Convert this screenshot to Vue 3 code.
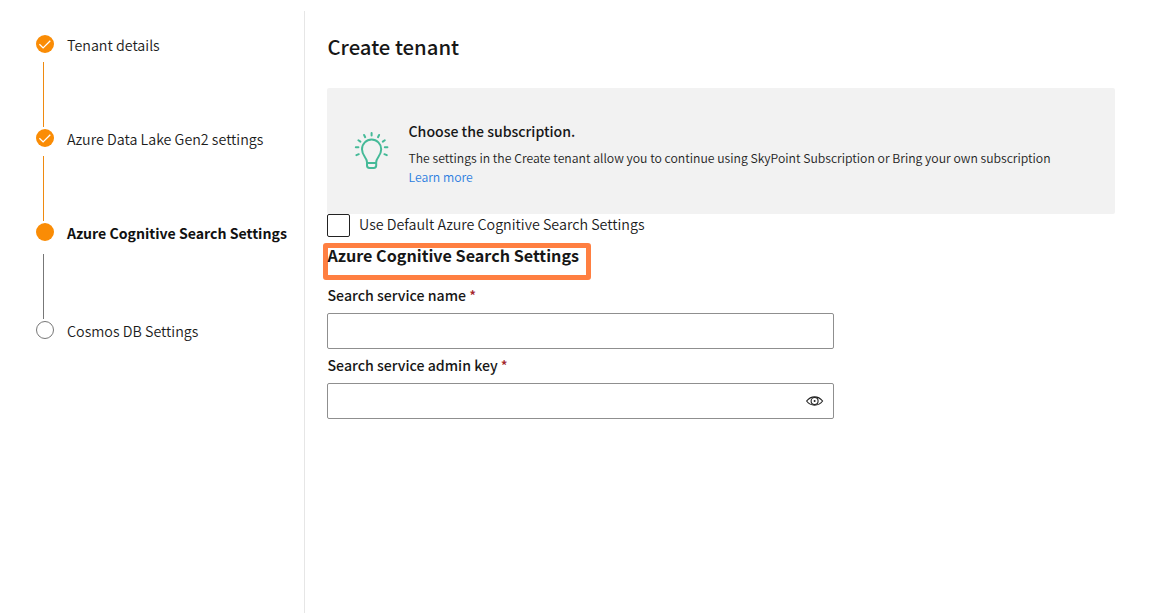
<script setup>
const steps = [
  { label: 'Tenant details', state: 'done' },
  { label: 'Azure Data Lake Gen2 settings', state: 'done' },
  { label: 'Azure Cognitive Search Settings', state: 'current' },
  { label: 'Cosmos DB Settings', state: 'todo' },
]
</script>

<template>
  <div class="page">
    <nav class="sidebar">
      <ol class="steps">
        <li v-for="(step, i) in steps" :key="step.label" class="step" :class="step.state">
          <div class="rail">
            <span class="dot">
              <svg v-if="step.state === 'done'" viewBox="0 0 18 18" width="18" height="18">
                <path d="M3.4 9.3 L7.1 12.9 L14.3 5.8" fill="none" stroke="#fff" stroke-width="1.3" />
              </svg>
            </span>
            <span v-if="i < steps.length - 1" class="line"></span>
          </div>
          <span class="label">{{ step.label }}</span>
        </li>
      </ol>
    </nav>
    <main class="content">
      <h1>Create tenant</h1>
      <section class="banner">
        <svg class="bulb" viewBox="0 0 36 40" width="36" height="40" fill="none" stroke="#45ba98" stroke-width="2" stroke-linecap="round">
          <path d="M13 31.2 C13 26.5 8 25 8 18.2 A9.6 9.6 0 0 1 27.2 18.2 C27.2 25 22.2 26.5 22.2 31.2 V34.6 Q22.2 37 19.8 37 H15.4 Q13 37 13 34.6 Z M13 31.9 H22.2" />
          <path d="M17.6 2 V4.6 M10.1 4 L11.2 6.2 M25.1 4 L24 6.2 M4.4 9.2 L6.4 10.6 M30.8 9.2 L28.8 10.6 M1.8 16.3 H4.4 M33.4 16.3 H30.8 M2.4 24.2 L4.8 23.2 M32.8 24.2 L30.4 23.2" />
        </svg>
        <div class="message">
          <h2>Choose the subscription.</h2>
          <p>The settings in the Create tenant allow you to continue using SkyPoint Subscription or Bring your own subscription</p>
          <a>Learn more</a>
        </div>
      </section>
      <label class="check"><span class="box"></span><span class="check-text">Use Default Azure Cognitive Search Settings</span></label>
      <div class="highlight"><h3>Azure Cognitive Search Settings</h3></div>
      <div class="field">
        <div class="name">Search service name <i>*</i></div>
        <div class="input"></div>
      </div>
      <div class="field">
        <div class="name">Search service admin key <i>*</i></div>
        <div class="input">
          <svg viewBox="0 0 18 10" width="18" height="10" fill="none" stroke="#222" stroke-width="1.1">
            <path d="M.6 5 Q4 .9 8.6 .9 T16.6 5 Q13.5 9.1 8.6 9.1 T.6 5 Z" />
            <circle cx="8.6" cy="5" r="3.5" />
            <circle cx="8.6" cy="5" r="1" fill="#222" stroke="none" />
          </svg>
        </div>
      </div>
    </main>
  </div>
</template>

<style>
body { background: #fff; }
</style>

<style scoped>
.page {
  display: flex;
  height: 613px;
  overflow: hidden;
  box-sizing: border-box;
  padding-top: 11px;
  font-family: "Noto Sans CJK SC", "Open Sans", sans-serif;
  color: #171717;
}
h1, h2, h3, p, ol { margin: 0; padding: 0; }
.sidebar {
  width: 304px;
  flex: none;
  border-right: 1px solid #e6e6e6;
}
.steps { list-style: none; padding: 24px 0 0 36px; }
.step { display: flex; gap: 13px; height: 94px; }
.step.current { height: 98px; }
.rail { width: 18px; display: flex; flex-direction: column; }
.dot {
  width: 18px;
  height: 18px;
  box-sizing: border-box;
  border-radius: 50%;
  background: #fa8c05;
}
.dot svg { display: block; }
.todo .dot { background: #fff; border: 1px solid #777; }
.line { width: 1px; height: 65px; margin: 9px 0 0 7px; background: #ef8a10; }
.current .line { margin-top: 13px; background: #777; }
.label { font-size: 14.27px; font-weight: 350; line-height: 20px; color: #1c1c1c; white-space: nowrap; }
.current .label { font-size: 14.12px; font-weight: 700; color: #111; }
.content { flex: 1; padding: 23px 35px 0 22px; }
h1 { font-size: 20.3px; line-height: 24px; font-weight: 500; padding-left: 0.5px; }
.banner {
  margin-top: 30px;
  height: 126px;
  box-sizing: border-box;
  border-radius: 2px;
  background: #f2f2f2;
  padding: 33px 0 0 27px;
  display: flex;
}
.bulb { flex: none; margin-top: 10px; }
.message { margin-left: 18.5px; white-space: nowrap; }
h2 { font-size: 14.12px; line-height: 20px; font-weight: 500; }
p { font-size: 12.22px; font-weight: 350; line-height: 19px; margin-top: 8px; color: #222; }
a { display: block; font-size: 12.22px; font-weight: 350; line-height: 19px; color: #2b7de0; }
.check { display: flex; gap: 9px; height: 24px; }
.box { width: 23px; height: 23px; box-sizing: border-box; border: 1px solid #222; border-radius: 2px; }
.check-text { font-size: 14.27px; font-weight: 350; line-height: 20px; color: #1c1c1c; }
.highlight {
  width: 268px;
  height: 37px;
  box-sizing: border-box;
  margin: 5px 0 0 -4px;
  border: 5px solid #ff7f41;
  border-radius: 3px;
}
h3 { font-size: 16.15px; line-height: 14px; font-weight: 700; white-space: nowrap; margin-left: -0.5px; }
.field { height: 70px; }
.name { font-size: 14.15px; line-height: 20px; font-weight: 500; padding: 5px 0 0 0.5px; }
.name i { font-style: normal; color: #a4262c; }
.input {
  width: 507px;
  height: 36px;
  box-sizing: border-box;
  margin-top: 8px;
  border: 1px solid #8f8f8f;
  border-radius: 2px;
  display: flex;
  align-items: center;
  justify-content: flex-end;
  padding-right: 9px;
}
</style>
